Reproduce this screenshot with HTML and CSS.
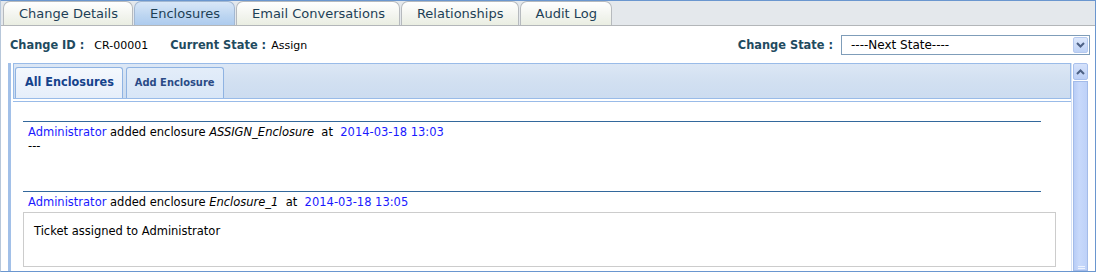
FILE: index.html
```html
<!DOCTYPE html>
<html lang="en">

<head>
    <meta charset="UTF-8">
    <title>Change Enclosures</title>
    <link rel="stylesheet" href="styles.css">
</head>

<body>
    <div class="frame">
        <div class="tabbar">
            <div class="tab">Change Details</div>
            <div class="tab active">Enclosures</div>
            <div class="tab">Email Conversations</div>
            <div class="tab">Relationships</div>
            <div class="tab">Audit Log</div>
        </div>

        <div class="infobar">
            <div class="info">
                <span class="label">Change ID :</span>
                <span class="value id-value">CR-00001</span>
                <span class="label">Current State :</span>
                <span class="value state-value">Assign</span>
            </div>
            <div class="state">
                <span class="label">Change State :</span>
                <div class="select">
                    <span class="select-text">----Next State----</span>
                    <span class="select-btn">
                        <svg width="9" height="6" viewBox="0 0 9 6"><path d="M1 1 L4.5 4.5 L8 1" fill="none" stroke="#4d6185" stroke-width="2"/></svg>
                    </span>
                </div>
            </div>
        </div>

        <div class="scroller">
            <div class="panel">
                <div class="panel-head">
                    <div class="ptab active">All Enclosures</div>
                    <div class="ptab">Add Enclosure</div>
                </div>
                <div class="panel-body">
                    <div class="entry">
                        <div class="rule"></div>
                        <div class="meta">
                            <a class="user">Administrator</a> added enclosure <em>ASSIGN_Enclosure</em>&nbsp; at&nbsp; <span class="date">2014-03-18 13:03</span>
                        </div>
                        <div class="note">---</div>
                    </div>
                    <div class="entry">
                        <div class="rule"></div>
                        <div class="meta">
                            <a class="user">Administrator</a> added enclosure <em>Enclosure_1</em>&nbsp; at&nbsp; <span class="date">2014-03-18 13:05</span>
                        </div>
                        <div class="note-box">Ticket assigned to Administrator</div>
                    </div>
                </div>
            </div>
            <div class="scrollbar">
                <div class="sb-btn">
                    <svg width="9" height="6" viewBox="0 0 9 6"><path d="M1 5 L4.5 1.5 L8 5" fill="none" stroke="#4d6185" stroke-width="2"/></svg>
                </div>
                <div class="sb-thumb"><span class="grip"></span></div>
            </div>
        </div>
    </div>
</body>
</html>
```

FILE: styles.css
```css
* {
    margin: 0;
    padding: 0;
    box-sizing: border-box;
}

body {
    font-family: "DejaVu Sans", Verdana, sans-serif;
    background: #ffffff;
}

.frame {
    width: 1096px;
    height: 272px;
    border: 1px solid #6a96cf;
    border-left-color: #b7c7da;
    display: flex;
    flex-direction: column;
    overflow: hidden;
}

/* top tabs */
.tabbar {
    height: 25px;
    flex: none;
    display: flex;
    align-items: flex-end;
    gap: 1px;
    padding-left: 2px;
    background: #e4e8ec;
    border-bottom: 1px solid #b3b6b9;
}

.tab {
    height: 24px;
    padding: 0 14px 0 15px;
    font-size: 13px;
    line-height: 23px;
    color: #1d3f56;
    background: linear-gradient(#ffffff, #f2f4ee 60%, #eaeee2);
    border: 1px solid #b6babe;
    border-bottom: none;
    border-radius: 7px 7px 0 0;
}

.tab.active {
    background: linear-gradient(#d9e7f8, #bcd5f1 60%, #adcbee);
    border-color: #a3b8d2;
}

/* change info row */
.infobar {
    height: 37px;
    flex: none;
    display: flex;
    justify-content: space-between;
    align-items: center;
    padding: 0 5px 0 9px;
}

.info {
    display: flex;
    align-items: baseline;
}

.label {
    font-weight: bold;
    font-size: 11.4px;
    color: #1f4b5f;
}

.value {
    font-size: 11px;
    color: #000;
}

.id-value {
    margin: 0 22px 0 10px;
}

.state-value {
    margin-left: 5px;
}

.state {
    display: flex;
    align-items: center;
}

.select {
    width: 249px;
    height: 20px;
    margin-left: 8px;
    border: 1px solid #7f9db9;
    display: flex;
    justify-content: space-between;
    align-items: center;
    padding: 0 1px 0 9px;
}

.select-text {
    font-size: 12px;
    color: #000;
}

.select-btn {
    width: 15px;
    height: 16px;
    display: flex;
    align-items: center;
    justify-content: center;
    background: linear-gradient(#dde8fc, #bed2f6);
    border: 1px solid #b5c9ef;
    border-radius: 2px;
}

/* scroll area */
.scroller {
    flex: 1;
    display: flex;
    margin: 0 6px 0 7px;
    border-left: 3px solid #a2c0e8;
    overflow: hidden;
}

.panel {
    flex: 1;
    margin-left: 2px;
    display: flex;
    flex-direction: column;
}

.panel-head {
    height: 36px;
    flex: none;
    display: flex;
    align-items: flex-end;
    gap: 3px;
    padding-left: 1px;
    background: linear-gradient(#dce7f5, #d2e0f1 50%, #ccdcf0);
    border: 1px solid #99bbe8;
}

.ptab {
    height: 31px;
    padding: 0 8px;
    font-family: "DejaVu Sans Condensed", Tahoma, sans-serif;
    font-weight: bold;
    font-size: 11px;
    line-height: 29px;
    color: #2a4a86;
    background: linear-gradient(#e3edf9, #d8e6f7);
    border: 1px solid #8fb3e2;
    border-bottom: none;
    border-radius: 3px 3px 0 0;
}

.ptab.active {
    font-size: 12.5px;
    line-height: 27px;
    color: #15428b;
    padding: 0 8px 0 9px;
    background: linear-gradient(#f4f8fd, #e6eefa);
}

.panel-body {
    flex: 1;
    margin-top: 2px;
    border-top: 1px solid #99bbe8;
    padding: 19px 1px 0 10px;
    font-size: 11.5px;
    line-height: 14px;
    color: #000;
}

.entry {
    margin-right: 29px;
}

.rule {
    border-top: 1px solid #33689c;
    margin-bottom: 3px;
}

.meta {
    padding-left: 5px;
}

.user,
.date {
    color: #1a1aff;
}

.note {
    padding-left: 5px;
    height: 52px;
}

.note-box {
    margin-top: 3px;
    margin-right: -15px;
    height: 55px;
    border: 1px solid #cccccc;
    padding: 11px 10px;
}

/* scrollbar */
.scrollbar {
    width: 18px;
    flex: none;
    display: flex;
    flex-direction: column;
    gap: 1px;
    padding: 0 1px;
    border-left: 1px solid #d6e2f6;
}

.sb-btn {
    height: 17px;
    display: flex;
    align-items: center;
    justify-content: center;
    background: linear-gradient(#d5e2fb, #bccff6);
    border: 1px solid #a9c0ec;
    border-radius: 2px;
}

.sb-thumb {
    flex: 1;
    position: relative;
    background: linear-gradient(90deg, #b8cdf6, #c8d9fb 40%, #bed1f8);
    border: 1px solid #a3bbe9;
}

.grip {
    position: absolute;
    left: 4px;
    bottom: 1px;
    width: 7px;
    height: 3px;
    border-top: 1px solid #eef3fe;
    border-bottom: 1px solid #eef3fe;
}
```
